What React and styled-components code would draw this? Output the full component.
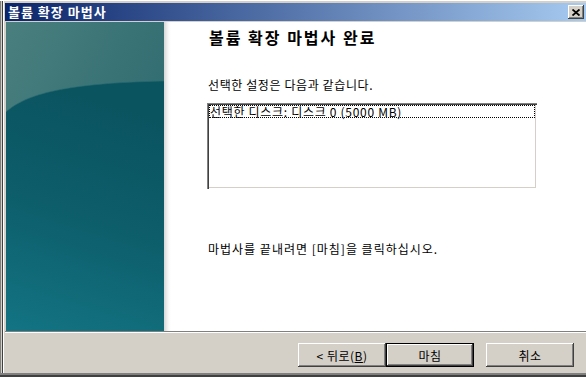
import React from 'react';
import styled, { createGlobalStyle } from 'styled-components';

const GlobalStyle = createGlobalStyle`
  html, body { margin: 0; padding: 0; background: #d4d0c8; overflow: hidden; }
  * { box-sizing: border-box; }
`;

const font = `"Noto Sans CJK KR", "Noto Sans", "Liberation Sans", sans-serif`;

const Window = styled.div`
  width: 586px;
  height: 377px;
  background: #d4d0c8;
  display: flex;
  flex-direction: column;
  padding: 3px 0 4px 5px;
  font-family: ${font};
  box-shadow: inset 0 -2px #404040, inset 0 -4px #808080, inset 0 1px #ffffff,
    inset 1px 0 #808080, inset 2px 0 #d4d0c8, inset 3px 0 #404040, inset 4px 0 #ffffff;
`;

const TitleBar = styled.div`
  height: 18px;
  margin-bottom: 1px;
  display: flex;
  align-items: center;
  justify-content: space-between;
  padding: 0 2px 0 3px;
  background: linear-gradient(to right, #0a246a, #a6caf0);
`;

const TitleText = styled.span`
  color: #fff;
  font-weight: bold;
  font-size: 13px;
  line-height: 18px;
  letter-spacing: 1px;
`;

const CloseButton = styled.div`
  width: 16px;
  height: 14px;
  background: #d4d0c8;
  display: flex;
  align-items: center;
  justify-content: center;
  box-shadow: inset -1px -1px #404040, inset 1px 1px #ffffff, inset -2px -2px #808080;
`;

const Main = styled.div`
  height: 309px;
  margin-left: 1px;
  display: flex;
`;

const SidePanel = styled.div`
  width: 158px;
  height: 309px;
  flex: none;
  display: flex;
`;

const Content = styled.div`
  flex: 1;
  background: linear-gradient(to right, #d6d6d6 0, #eeeeee 3px, #fafafa 5px, #ffffff 7px);
  padding: 6px 0 0 44px;
  display: flex;
  flex-direction: column;
  align-items: flex-start;
  color: #000;
`;

const Heading = styled.h1`
  margin: 0 0 0 1px;
  font-size: 16px;
  line-height: 18px;
  font-weight: bold;
  letter-spacing: 2px;
`;

const Text = styled.p`
  margin: ${p => p.$top}px 0 0 0;
  font-size: 12px;
  line-height: 14px;
  letter-spacing: ${p => p.$ls}px;
`;

const ListBox = styled.div`
  margin: 11px 0 0 -1px;
  width: 330px;
  height: 86px;
  background: #fff;
  padding: 2px;
  box-shadow: inset 1px 1px #808080, inset 2px 2px #404040, inset -1px -1px #ffffff, inset -2px -2px #d4d0c8;
`;

const ListItem = styled.div`
  height: 13px;
  line-height: 13px;
  font-size: 12px;
  padding-left: 1px;
  letter-spacing: 0.7px;
  outline: 1px dotted #000;
  outline-offset: -1px;
  white-space: nowrap;
`;

const Separator = styled.div`
  height: 2px;
  border-top: 1px solid #808080;
  border-bottom: 1px solid #ffffff;
`;

const Footer = styled.div`
  height: 40px;
  display: flex;
  justify-content: flex-end;
  align-items: flex-start;
  padding: 10px 12px 0 0;
`;

const Button = styled.button`
  width: 88px;
  height: 24px;
  margin-left: ${p => p.$gap || 0}px;
  padding: 0;
  font-family: ${font};
  font-size: 12px;
  letter-spacing: 0.5px;
  color: #000;
  background: #d4d0c8;
  border: ${p => (p.$default ? '1px solid #000' : 'none')};
  box-shadow: inset -1px -1px #404040, inset 1px 1px #ffffff, inset -2px -2px #808080, inset 2px 2px #d4d0c8;
  u { text-decoration: underline; }
`;

function PanelArt() {
  return (
    <svg width="158" height="309" viewBox="0 0 158 309">
      <defs>
        <linearGradient id="pTop" x1="0" y1="0" x2="1" y2="1">
          <stop offset="0" stopColor="#4a7f7e" />
          <stop offset="1" stopColor="#23626a" />
        </linearGradient>
        <linearGradient id="pBot" x1="0.2" y1="0" x2="0" y2="1">
          <stop offset="0" stopColor="#0a5460" />
          <stop offset="0.45" stopColor="#0d5d6a" />
          <stop offset="1" stopColor="#137483" />
        </linearGradient>
      </defs>
      <rect width="158" height="309" fill="url(#pTop)" />
      <path d="M0 90 C 20 72, 60 61, 158 59 L158 309 L0 309 Z" fill="url(#pBot)" />
      <path d="M0 90 C 20 72, 60 61, 158 59" fill="none" stroke="#2a6b72" strokeWidth="1" opacity="0.6" />
    </svg>
  );
}

export default function App() {
  return (
    <>
      <GlobalStyle />
      <Window>
        <TitleBar>
          <TitleText>볼륨 확장 마법사</TitleText>
          <CloseButton>
            <svg width="8" height="7" viewBox="0 0 8 7">
              <path d="M0.5 0.5 L7.5 6.5 M7.5 0.5 L0.5 6.5" stroke="#000" strokeWidth="1.8" />
            </svg>
          </CloseButton>
        </TitleBar>
        <Main>
          <SidePanel>
            <PanelArt />
          </SidePanel>
          <Content>
            <Heading>볼륨 확장 마법사 완료</Heading>
            <Text $top={32} $ls={0.6}>선택한 설정은 다음과 같습니다.</Text>
            <ListBox>
              <ListItem>선택한 디스크: 디스크 0 (5000 MB)</ListItem>
            </ListBox>
            <Text $top={53} $ls={1}>마법사를 끝내려면 [마침]을 클릭하십시오.</Text>
          </Content>
        </Main>
        <Separator />
        <Footer>
          <Button>&lt; 뒤로(<u>B</u>)</Button>
          <Button $default>마침</Button>
          <Button $gap={12}>취소</Button>
        </Footer>
      </Window>
    </>
  );
}
